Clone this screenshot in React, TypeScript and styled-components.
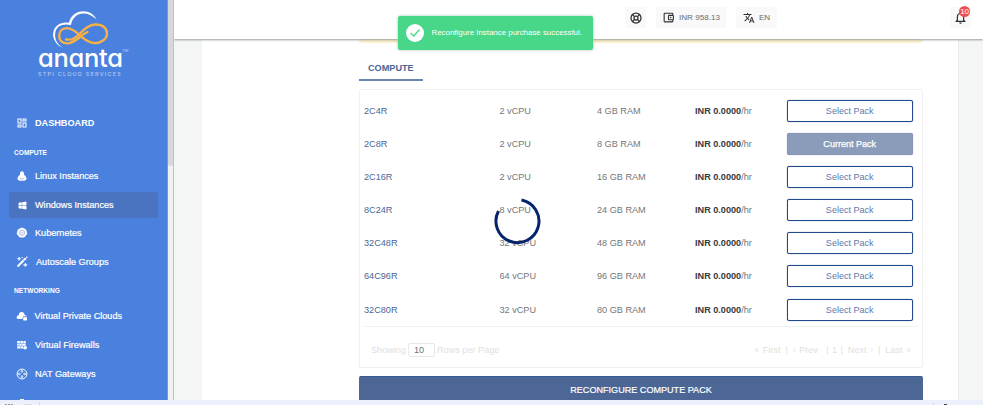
import React from 'react';
import styled, { createGlobalStyle, css } from 'styled-components';
import { MdOutlineAccountBalanceWallet, MdTranslate, MdNotificationsNone, MdOutlineDashboard } from 'react-icons/md';
import { FaWindows } from 'react-icons/fa';
import { LifeBuoy } from 'lucide-react';

const GlobalStyle = createGlobalStyle`
  * { box-sizing: border-box; }
  body { margin: 0; overflow: hidden; background: #fff; }
  button { font-family: inherit; margin: 0; padding: 0; }
`;

const Screen = styled.div`
  position: relative;
  display: grid;
  grid-template-columns: 168px 6px 1fr;
  grid-template-rows: 400px 5px;
  width: 983px;
  height: 405px;
  overflow: hidden;
  font: 9.15px/12px 'Liberation Sans', Arial, sans-serif;
  color: #74767a;
  white-space: nowrap;
`;

const Sidebar = styled.aside`
  background: #4b81de;
  color: #fff;
  overflow: hidden;
  border-right: 1px solid #6d9ae8;
`;

const Brand = styled.div`
  height: 108px;
  padding: 11px 0 0 38px;
`;

const CloudMark = styled.svg`
  display: block;
  margin-left: 14px;
`;

const BrandName = styled.div`
  display: flex;
  height: 20px;
  margin-top: -1px;
  font: 500 25.5px/20px Inter, sans-serif;
  font-feature-settings: 'cv11';
  letter-spacing: -0.3px;
`;

const Trademark = styled.span`
  font: 4px/6px 'Liberation Sans', sans-serif;
  letter-spacing: 0;
  color: #b9d0f7;
`;

const BrandTag = styled.div`
  margin-top: 2.5px;
  font: 500 5.4px/7px Inter, sans-serif;
  letter-spacing: 1.28px;
  color: #b4c9ef;
`;

const NavItem = styled.a<{ $active?: boolean; $bold?: boolean; $h?: number; $gap?: number }>`
  display: flex;
  align-items: center;
  height: ${p => p.$h ?? 28.6}px;
  padding-left: 16px;
  font-weight: ${p => (p.$bold ? 700 : 400)};
  -webkit-text-stroke: ${p => (p.$bold ? 0 : 0.2)}px #fff;
  svg { width: 12px; height: 12px; flex: none; margin-right: ${p => p.$gap ?? 7}px; }
  ${p => p.$active && css`
    height: 26px;
    margin: 6px 9px 1px 9px;
    padding-left: 7px;
    border-radius: 2px;
    background: #4b74c0;
    svg { width: 9px; height: 9px; margin: 0 8.5px 0 1.5px; }
  `}
`;

const NavHeading = styled.div<{ $h: number; $pt?: number }>`
  display: flex;
  align-items: center;
  height: ${p => p.$h}px;
  padding: ${p => p.$pt ?? 0}px 0 0 14px;
  font-size: 6.6px;
  font-weight: 700;
`;

const ScrollTrack = styled.div`
  background: #f1f1f1;
  border-right: 1px solid #b4c1e3;
`;

const ScrollThumb = styled.div`
  height: 166px;
  background: #d8d8db;
  border-radius: 0 0 2px 2px;
`;

const Main = styled.main`
  display: flex;
  flex-direction: column;
  min-width: 0;
  overflow: hidden;
  background: #f4f6f6;
`;

const Header = styled.header`
  position: relative;
  z-index: 1;
  flex: none;
  display: flex;
  height: 39px;
  padding: 7px 12px 0 451px;
  background: #fff;
  box-shadow: 0 1px 2px #9a9d9d;
`;

const HeaderChip = styled.button<{ $w: number; $gap?: number; $push?: boolean }>`
  position: relative;
  display: flex;
  align-items: center;
  justify-content: center;
  gap: 4px;
  width: ${p => p.$w}px;
  height: 21px;
  margin-right: ${p => p.$gap ?? 0}px;
  margin-left: ${p => (p.$push ? 'auto' : 0)};
  border: 0;
  border-radius: 2px;
  background: #f9f9f9;
  color: #303234;
  font-size: 8.1px;
  span { color: #6a6c6e; }
`;

const Badge = styled.b`
  position: absolute;
  top: -1px;
  right: 1px;
  width: 11px;
  height: 11px;
  border-radius: 50%;
  background: #ef4e50;
  color: #fff;
  font: 8px/11px 'Liberation Sans', sans-serif;
  letter-spacing: -0.3px;
  text-align: center;
`;

const Card = styled.section`
  width: 757px;
  height: 361px;
  margin-left: 28px;
  padding: 0 36px 0 157px;
  background: #fff;
  border-right: 1px solid #e9ecec;
`;

const Notice = styled.div`
  height: 4px;
  background: #fcf0cc;
  border-radius: 0 0 2px 2px;
`;

const Tab = styled.div`
  width: 64px;
  height: 38px;
  padding: 19px 0 0 9px;
  border-bottom: 2px solid #6e85b2;
  color: #4b6596;
  font-weight: 700;
`;

const PackPanel = styled.div`
  width: 564px;
  height: 279px;
  margin-top: 8px;
  padding: 4px 4px 0;
  border: 1px solid #f0f0f1;
  border-radius: 2px;
`;

const PackRows = styled.div`
  height: 233px;
  border-bottom: 1px solid #f0f1f1;
`;

const PackRow = styled.div`
  display: grid;
  grid-template-columns: 135.5px 97.5px 98px 92px 125px;
  align-items: center;
  height: 33.17px;
  b { color: #38393c; font-weight: 700; }
`;

const PackName = styled.span`
  color: #4b6596;
`;

const PackButton = styled.button<{ $current?: boolean }>`
  height: 22px;
  width: 125.5px;
  border: 1px solid ${p => (p.$current ? '#8496ba' : '#1f4a8c')};
  box-shadow: 0 0 1px ${p => (p.$current ? '#8496ba' : '#4a6ba6')};
  border-radius: 2px;
  background: ${p => (p.$current ? '#8b9cbb' : '#fff')};
  color: ${p => (p.$current ? '#fff' : '#6079aa')};
  -webkit-text-stroke: ${p => (p.$current ? '0.25px #fff' : '0')};
  font-size: 9.05px;
`;

const Pager = styled.div`
  display: flex;
  align-items: center;
  height: 45px;
  padding: 0 7px;
  color: #dfe0e1;
`;

const PageSize = styled.span`
  width: 27px;
  height: 14px;
  margin: 0 2px;
  padding-left: 5px;
  border: 1px solid #e7e8e9;
  border-radius: 2px;
  color: #707277;
`;

const PageLinks = styled.span`
  display: flex;
  gap: 5px;
  margin-left: auto;
  word-spacing: 0.8px;
`;

const Submit = styled.button`
  display: block;
  width: 564px;
  height: 27px;
  margin-top: 8px;
  border: 0;
  border-top: 1px solid #365a93;
  border-radius: 2px;
  background: #4c6796;
  color: #fff;
  font-size: 9.08px;
  -webkit-text-stroke: 0.2px #fff;
`;

const Toast = styled.div`
  position: absolute;
  z-index: 3;
  left: 398px;
  top: 16px;
  display: flex;
  align-items: center;
  width: 195px;
  height: 34px;
  padding-left: 8px;
  gap: 7.5px;
  border-radius: 2px;
  background: #48d689;
  box-shadow: 0 0 3px #a0c9b2;
  color: #fff;
  font-size: 7.9px;
`;

const Spinner = styled.svg`
  position: absolute;
  z-index: 2;
  left: 494px;
  top: 197px;
`;

const Taskbar = styled.footer`
  grid-column: 1 / -1;
  display: flex;
  background: #ebf0fa;
  svg { display: block; }
`;

const LinuxIcon = () => (
  <svg viewBox="0 0 12 12" fill="#fff"><path d="M6 1.3C4.4 1.3 3.9 2.8 4 4.4L1.9 7.1 1.4 9.4 3.8 10.7H8.2L10.6 9.4 10.1 7.1 8 4.4C8.1 2.8 7.6 1.3 6 1.3Z" /><path d="M3.7 8.4C5 9.2 7 9.2 8.3 8.4" stroke="#4b81de" strokeWidth=".5" fill="none" /></svg>
);
const KubeIcon = () => (
  <svg viewBox="0 0 12 12" fill="none" stroke="#fff"><path d="M6 1 9.7 2.7 10.8 6.7 8.3 10H3.7L1.2 6.7 2.3 2.7Z" fill="#fff" strokeLinejoin="round" /><circle cx="6" cy="5.8" r="2.7" stroke="#8fb0ec" strokeWidth=".7" /><path d="M6 2.5V9M2.8 5.8H9.2M3.8 3.6 8.2 8M8.2 3.6 3.8 8" stroke="#b5cbf3" strokeWidth=".5" /></svg>
);
const WandIcon = () => (
  <svg viewBox="0 0 12 12" fill="none" stroke="#fff"><path d="M1.6 10.5 9.7 2.3" strokeWidth="2" /><path d="M7.2 3.8 8.4 5" stroke="#4b81de" strokeWidth=".6" /><path d="M3.1 1V4.6M1.3 2.8H4.9M9.3 7V10.8M7.4 8.9H11.2M10.8.6V2.2M6.2.9V2.1" strokeWidth="1.1" /></svg>
);
const CloudLockIcon = () => (
  <svg viewBox="0 0 12 12" fill="#fff"><path d="M.8 8.5C.3 6.7 1.4 5.4 2.7 5.2 2.9 3.2 4 2 5.7 2 7.4 2 8.3 3.1 8.5 4.5L9.6 5.8 7.1 6.2 6.4 8.9H2Z" /><rect x="7.2" y="7.3" width="3.8" height="3.2" rx=".4" /><path d="M8 7.2V6.3C8 5.2 10.1 5.2 10.1 6.3V7.2" fill="none" stroke="#fff" strokeWidth=".7" /></svg>
);
const FirewallIcon = () => (
  <svg viewBox="0 0 12 12" fill="#fff"><path d="M1.2 2H9.8V6L7 7.2V9.5H1.2Z" /><path d="M1 4.4H10M1 7H7M4.3 2V4.4M7.3 2V4.4M3 4.4V7M6 4.4V7M4.3 7V10" stroke="#4b81de" strokeWidth=".5" /><path d="M9 6C10.4 7.3 11 8 11 9A2 1.8 0 0 1 7.1 9C7.1 8 8.7 7.6 9 6Z" /></svg>
);
const GatewayIcon = () => (
  <svg viewBox="0 0 12 12" fill="none" stroke="#fff"><circle cx="6" cy="6" r="4.9" strokeWidth="1" /><path d="M6 2.4V4.8M6 7.2V9.6M2.4 6H4.8M7.2 6H9.6M5 3.6 6 2.4 7 3.6M5 8.4 6 9.6 7 8.4M3.6 5 2.4 6 3.6 7M8.4 5 9.6 6 8.4 7" strokeWidth=".9" /></svg>
);
const GatePostIcon = () => (
  <svg viewBox="0 0 12 12" fill="#fff"><path d="M4 0H8V2H10V10H2V2H4Z" /></svg>
);

const packs = [
  ['2C4R', '2', '4'],
  ['2C8R', '2', '8'],
  ['2C16R', '2', '16'],
  ['8C24R', '8', '24'],
  ['32C48R', '32', '48'],
  ['64C96R', '64', '96'],
  ['32C80R', '32', '80'],
];

export default function App() {
  return (
    <Screen>
      <GlobalStyle />
      <Sidebar>
        <Brand>
          <CloudMark width="58" height="38" viewBox="0 0 58 38" fill="none">
            <path d="M11 36.8C4 34 .5 28 1.2 22 2.2 14.500 9 10.500 17 11.700 18.500 4.500 24.500.3 31 .3 37.500.3 42 3.500 44.500 8.500 40 4 35.500 2.300 31.500 2.400 25 2.500 20 7 19 14 10.500 12 4.500 15 3.300 21.500 2.300 28 5 33 11 36.800Z" fill="#fff" />
            <path d="M14 28.500C20 29.500 23 27 27 23.500C32 18 37 13.700 43 13.500C51 13.200 55 17.500 55 22.300C55 28 49 32.500 42 32C35 31.500 31 27 27 23.500C23 20 19 17.200 15 17.200C10 17.200 7.200 20.500 7.200 25C7.200 30 11 32.700 16 32.300C24 31.700 29 23.500 35.500 21" stroke="#f8b145" strokeWidth="2.300" strokeLinecap="round" />
          </CloudMark>
          <BrandName>ananta<Trademark>TM</Trademark></BrandName>
          <BrandTag>STPI CLOUD SERVICES</BrandTag>
        </Brand>
        <NavItem $bold $h={30}><MdOutlineDashboard />DASHBOARD</NavItem>
        <NavHeading $h={28} $pt={2}>COMPUTE</NavHeading>
        <NavItem $h={20}><LinuxIcon />Linux Instances</NavItem>
        <NavItem $active><FaWindows />Windows Instances</NavItem>
        <NavItem $h={28}><KubeIcon />Kubernetes</NavItem>
        <NavItem $h={29} $gap={8}><WandIcon />Autoscale Groups</NavItem>
        <NavHeading $h={30}>NETWORKING</NavHeading>
        <NavItem $h={19} $gap={6.5}><CloudLockIcon />Virtual Private Clouds</NavItem>
        <NavItem $h={39}><FirewallIcon />Virtual Firewalls</NavItem>
        <NavItem $h={19}><GatewayIcon />NAT Gateways</NavItem>
        <NavItem $h={44}><GatePostIcon /></NavItem>
      </Sidebar>
      <ScrollTrack><ScrollThumb /></ScrollTrack>
      <Main>
        <Header>
          <HeaderChip $w={21} $gap={10}><LifeBuoy size={12} strokeWidth={2.5} /></HeaderChip>
          <HeaderChip $w={70} $gap={10}><MdOutlineAccountBalanceWallet size={13} /><span>INR 958.13</span></HeaderChip>
          <HeaderChip $w={41}><MdTranslate size={12} /><span>EN</span></HeaderChip>
          <HeaderChip $w={21} $push><MdNotificationsNone size={15} /><Badge>10</Badge></HeaderChip>
        </Header>
        <Card>
          <Notice />
          <Tab>COMPUTE</Tab>
          <PackPanel>
            <PackRows>
              {packs.map(([name, cpu, ram]) => (
                <PackRow key={name}>
                  <PackName>{name}</PackName>
                  <span>{cpu} vCPU</span>
                  <span>{ram} GB RAM</span>
                  <span><b>INR 0.0000</b>/hr</span>
                  <PackButton $current={name === '2C8R'}>{name === '2C8R' ? 'Current Pack' : 'Select Pack'}</PackButton>
                </PackRow>
              ))}
            </PackRows>
            <Pager>
              Showing<PageSize>10</PageSize>Rows per Page
              <PageLinks><span>« First</span><span>|</span><span>‹ Prev</span><span>&nbsp;| 1 |</span><span>Next ›</span><span>|</span><span>Last »</span></PageLinks>
            </Pager>
          </PackPanel>
          <Submit>RECONFIGURE COMPUTE PACK</Submit>
        </Card>
      </Main>
      <Taskbar>
        <svg width="983" height="5">
          <path d="M5 4.5H14" stroke="#999" strokeDasharray="2 1" />
          <path d="M24 4.5H32" stroke="#dce0e8" />
          <path d="M39.5 2V5M933.5 3V5" stroke="#d5dae4" />
          <path d="M944 4.5H947" stroke="#444" />
        </svg>
      </Taskbar>
      <Toast>
        <svg width="18" height="18" viewBox="0 0 18 18"><circle cx="9" cy="9" r="9" fill="#fff" /><path d="M4.5 9 7.7 12 13.5 5.5" fill="none" stroke="#48d689" strokeWidth="1.3" /></svg>
        Reconfigure Instance purchase successful.
      </Toast>
      <Spinner width="48" height="48" viewBox="0 0 48 48">
        <path d="M27.500 3A21.500 21.500 0 1 1 4.500 14" fill="none" stroke="#06246b" strokeWidth="3" />
      </Spinner>
    </Screen>
  );
}
